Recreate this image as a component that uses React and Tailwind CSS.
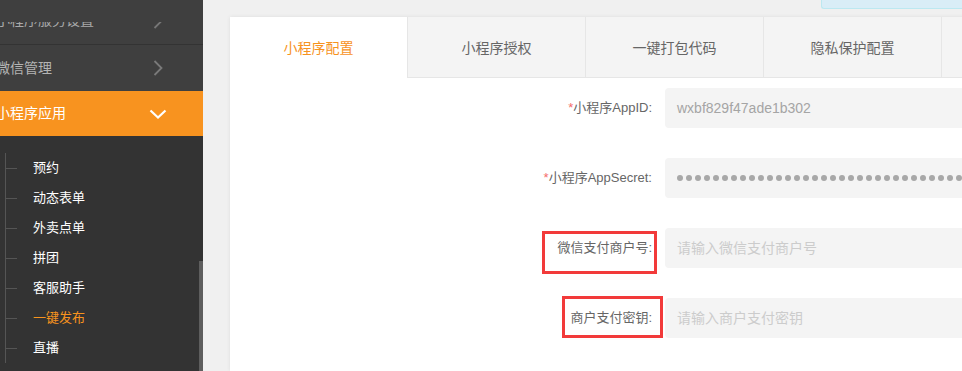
import React from 'react'

const font = { fontFamily: '"Liberation Sans", "Noto Sans CJK SC", sans-serif' }

const subMenu = ['预约', '动态表单', '外卖点单', '拼团', '客服助手', '一键发布', '直播']
const tabs = ['小程序配置', '小程序授权', '一键打包代码', '隐私保护配置', '']

const Sidebar = () => {
  return (
    <div className="relative w-[203px] shrink-0 h-full bg-[#333333] flex flex-col">
      <div className="h-[45px] bg-[#3f3f3f] border-b border-[#333333]">
        <div className="mt-[22px] h-[8px] overflow-hidden">
          <div className="-mt-[12px] h-[21px] flex items-center justify-between pr-[40px] ml-[-4px] text-[14px] text-[#aaaaaa]">
            <span>小程序服务设置</span>
            <svg width="10" height="16" viewBox="0 0 10 16" fill="none" stroke="#777" strokeWidth="1.8"><polyline points="1.5,1 8.5,8 1.5,15" /></svg>
          </div>
        </div>
      </div>
      <div className="h-[46px] bg-[#3f3f3f] flex items-center justify-between pr-[40px] ml-[-4px] text-[14px] text-[#b4b4b4]">
        <span>微信管理</span>
        <svg width="10" height="16" viewBox="0 0 10 16" fill="none" stroke="#7a7a7a" strokeWidth="1.8"><polyline points="1.5,1 8.5,8 1.5,15" /></svg>
      </div>
      <div className="h-[45px] bg-[#f8931f] flex items-center justify-between pr-[36px] ml-[-4px] text-[14px] text-white">
        <span>小程序应用</span>
        <svg width="18" height="10" viewBox="0 0 18 10" fill="none" stroke="#fff" strokeWidth="2.2"><polyline points="1.5,1.5 9,8.5 16.5,1.5" /></svg>
      </div>
      <div className="pt-[17px] pl-[5px]">
        <div className="border-l border-[#555555]">
          {subMenu.map((item) => (
            <div key={item} className="h-[30px] flex items-center">
              <div className="w-[11px] h-px bg-[#555555]" />
              <span className={'ml-[16px] text-[13px] ' + (item === '一键发布' ? 'text-[#f7931e]' : 'text-white')}>{item}</span>
            </div>
          ))}
        </div>
      </div>
      <div className="absolute right-0 top-[261px] bottom-0 w-[4px] bg-[#5e5e5e]" />
    </div>
  )
}

const FormRow = ({ label, required, value, placeholder, secret, box }) => {
  return (
    <div className="flex items-center h-[40px] mb-[30px]">
      <div className="w-[422px] shrink-0 text-right text-[13px] text-[#666666]">
        <span className="relative inline-block leading-[20px]">
          {required && <span className="text-[#f56c6c]">*</span>}
          {label}
          {box === 1 && <span className="absolute -left-[15px] -right-[5px] -top-[7px] -bottom-[16px] border-[3px] border-[#f23a3a]" />}
          {box === 2 && <span className="absolute -left-[8px] -right-[11px] -top-[12px] -bottom-[10px] border-[3px] border-[#f23a3a]" />}
        </span>
      </div>
      <div className="ml-[13px] w-[400px] shrink-0 h-[40px] bg-[#f4f4f4] rounded-[4px] pl-3 flex items-center overflow-hidden text-[14px]">
        {secret ? (
          <div className="flex gap-[3px]">
            {Array.from({ length: 40 }).map((_, i) => (
              <span key={i} className="w-[6px] h-[6px] rounded-full bg-[#a8a8a8] shrink-0" />
            ))}
          </div>
        ) : value ? (
          <span className="text-[#a5a5a5]">{value}</span>
        ) : (
          <span className="text-[#cccccc]">{placeholder}</span>
        )}
      </div>
    </div>
  )
}

const App = () => {
  return (
    <div style={font} className="w-[962px] h-[371px] overflow-hidden flex bg-[#f0f0f0]">
      <Sidebar />
      <div className="flex-1 min-w-0 flex flex-col overflow-hidden">
        <div className="h-[17px] flex justify-end shrink-0">
          <div className="w-[141px] h-[9px] bg-[#d9edf7] border border-t-0 border-r-0 border-[#bce8f1] rounded-bl-[3px]" />
        </div>
        <div className="ml-[27px] w-[900px] shrink-0 flex-1 bg-white shadow-[0_0_4px_rgba(0,0,0,0.08)]">
          <div className="flex h-[61px]">
            {tabs.map((t, i) => (
              <div
                key={i}
                className={
                  i === 0
                    ? 'w-[177px] shrink-0 bg-white flex items-center justify-center text-[14px] text-[#f7931e]'
                    : 'w-[178px] shrink-0 bg-[#f4f4f4] border-l border-b border-[#e6e6e6] flex items-center justify-center pt-[2px] text-[14px] text-[#666666]'
                }
              >
                {i === 0 ? <span className="pt-[2px]">{t}</span> : t}
              </div>
            ))}
          </div>
          <div className="pt-[10px]">
            <FormRow label="小程序AppID:" required value="wxbf829f47ade1b302" />
            <FormRow label="小程序AppSecret:" required secret />
            <FormRow label="微信支付商户号:" placeholder="请输入微信支付商户号" box={1} />
            <FormRow label="商户支付密钥:" placeholder="请输入商户支付密钥" box={2} />
          </div>
        </div>
      </div>
    </div>
  )
}

export default App
